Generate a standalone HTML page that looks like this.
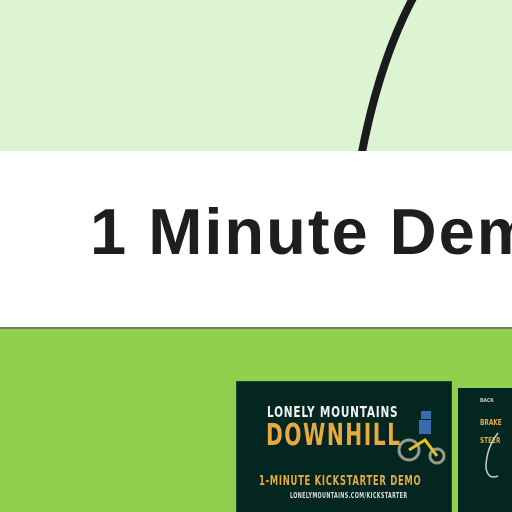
<!DOCTYPE html>
<html><head><style>
html,body{margin:0;width:512px;height:512px;overflow:hidden}
body{position:relative;font-family:"Liberation Sans",sans-serif;background:#8fd04f}
.top{position:absolute;left:0;top:0;width:512px;height:151px;background:#dcf4d2}
.band{position:absolute;left:0;top:151px;width:512px;height:176px;background:#fff;border-bottom:2px solid #7a7a5a;overflow:hidden}
.title{position:absolute;left:90px;top:43px;font-size:65px;font-weight:bold;color:#1e1e1e;white-space:nowrap;letter-spacing:2px}
.card{position:absolute;top:381px;background:#032620;height:131px;overflow:hidden}
.c1{left:236px;width:214px;border:1px solid #0d4a30;border-bottom:none}
.c2{left:458px;width:54px;top:388px;height:124px}
.t{position:absolute;font-family:"DejaVu Sans Condensed","Liberation Sans Narrow",sans-serif;font-weight:bold;white-space:nowrap;transform-origin:0 0}
</style></head><body>
<div class="top"></div>
<svg style="position:absolute;left:0;top:0" width="512" height="152"><path d="M413,-2 Q380,60 362,152" stroke="#1b1b1b" stroke-width="8" fill="none"/></svg>
<div class="band"><div class="title">1 Minute Dem</div></div>
<div class="card c1">
<div class="t" style="left:30px;top:21px;font-size:15px;color:#f2f2ee;letter-spacing:1px;transform:scaleX(.78)">LONELY MOUNTAINS</div>
<div class="t" style="left:29px;top:36px;font-size:30px;color:#e8a93e;letter-spacing:2px;transform:scaleX(.75)">DOWNHILL</div>
<div class="t" style="left:22px;top:92px;font-size:13px;color:#e8a93e;letter-spacing:1px;transform:scaleX(.72)">1-MINUTE KICKSTARTER DEMO</div>
<div class="t" style="left:53px;top:109px;font-size:7.5px;color:#ddd;letter-spacing:.5px;transform:scaleX(.72)">LONELYMOUNTAINS.COM/KICKSTARTER</div>
<svg style="position:absolute;left:160px;top:28px" width="50" height="55"><circle cx="12" cy="40" r="10" stroke="#998" stroke-width="3" fill="none"/><circle cx="40" cy="46" r="7" stroke="#998" stroke-width="3" fill="none"/><path d="M12 40 L28 30 L40 46" stroke="#e8c020" stroke-width="3" fill="none"/><rect x="22" y="10" width="12" height="14" fill="#3a6ab0"/><rect x="24" y="1" width="10" height="8" fill="#3a6ab0"/></svg>
</div>
<div class="card c2">
<div class="t" style="left:22px;top:10px;font-size:5px;color:#ccc">BACK</div>
<div class="t" style="left:22px;top:30px;font-size:8px;color:#e8a93e;transform:scaleX(.8)">BRAKE</div>
<div class="t" style="left:22px;top:48px;font-size:8px;color:#e8a93e;transform:scaleX(.8)">STEER</div>
<svg style="position:absolute;left:20px;top:40px" width="40" height="60"><path d="M20 5 Q8 20 8 40 Q10 52 20 48" stroke="#ccc" stroke-width="1.5" fill="none"/></svg>
</div>
</body></html>
